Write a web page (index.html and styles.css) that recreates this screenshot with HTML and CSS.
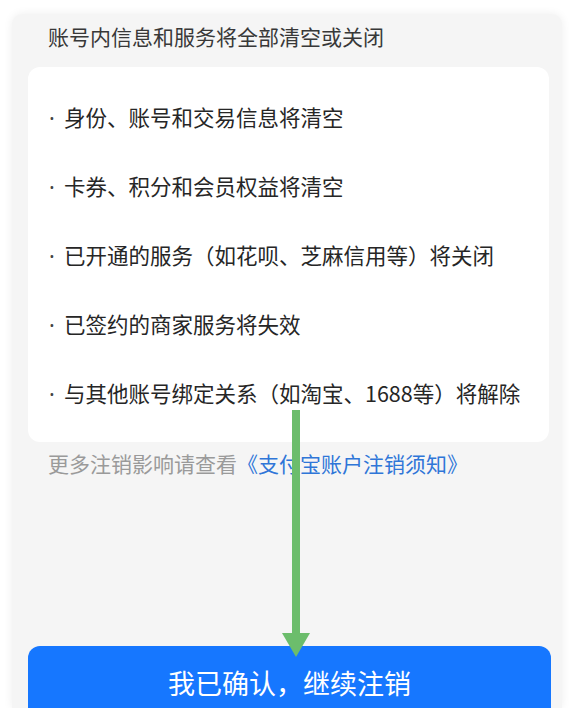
FILE: index.html
```html
<!DOCTYPE html>
<html lang="zh-CN">
<head>
    <meta charset="UTF-8">
    <meta name="viewport" content="width=device-width, initial-scale=1.0">
    <title>账户注销</title>
    <link rel="stylesheet" href="styles.css">
</head>
<body>
    <div class="panel">
        <h2 class="panel-title">账号内信息和服务将全部清空或关闭</h2>

        <ul class="info-card">
            <li><span class="dot">·</span>身份、账号和交易信息将清空</li>
            <li><span class="dot">·</span>卡券、积分和会员权益将清空</li>
            <li><span class="dot">·</span>已开通的服务（如花呗、芝麻信用等）将关闭</li>
            <li><span class="dot">·</span>已签约的商家服务将失效</li>
            <li><span class="dot">·</span>与其他账号绑定关系（如淘宝、1688等）将解除</li>
        </ul>

        <p class="note">更多注销影响请查看<a href="#">《支付宝账户注销须知》</a></p>

        <button class="confirm-btn">我已确认，继续注销</button>

        <!-- annotation arrow drawn over the page -->
        <svg class="arrow" width="32" height="256" viewBox="0 0 32 256">
            <rect x="12" y="5" width="8" height="225" fill="#6cbd6c"/>
            <polygon points="2,228 30,228 16,252" fill="#6cbd6c"/>
        </svg>
    </div>
</body>
</html>
```

FILE: styles.css
```css
* {
    margin: 0;
    padding: 0;
    box-sizing: border-box;
}

body {
    font-family: "Noto Sans CJK SC", "Noto Sans", sans-serif;
    background: #ffffff;
    color: #222;
}

.panel {
    position: relative;
    margin: 14px 12px 0 12px;
    height: 694px;
    background: #f5f5f5;
    border-radius: 10px 10px 0 0;
    box-shadow: 0 0 10px rgba(0, 0, 0, 0.07);
    overflow: hidden;
    display: flex;
    flex-direction: column;
}

.panel-title {
    margin: 7px 0 0 36px;
    font-size: 21px;
    font-weight: 400;
    line-height: 30px;
    color: #383838;
}

.info-card {
    list-style: none;
    margin: 16px 13px 0 16px;
    padding: 15px 0 15px 18px;
    background: #fff;
    border-radius: 12px;
}

.info-card li {
    height: 69px;
    line-height: 69px;
    font-size: 21.5px;
    color: #262626;
    white-space: nowrap;
}

.dot {
    display: inline-block;
    width: 12px;
    margin-right: 6px;
    font-family: "Noto Sans", sans-serif;
    text-align: center;
    color: #444;
}

.note {
    margin: 9px 0 0 36px;
    font-size: 21px;
    line-height: 24px;
    color: #9a9a9a;
}

.note a {
    color: #2f76d8;
    text-decoration: none;
}

.confirm-btn {
    flex-shrink: 0;
    margin: 171px 11px 0 16px;
    height: 74px;
    border: none;
    border-radius: 12px;
    background: #1677ff;
    color: #fff;
    font-family: inherit;
    font-size: 27px;
    line-height: 74px;
    cursor: pointer;
}

.arrow {
    position: absolute;
    left: 268px;
    top: 391px;
    z-index: 2;
}
```
